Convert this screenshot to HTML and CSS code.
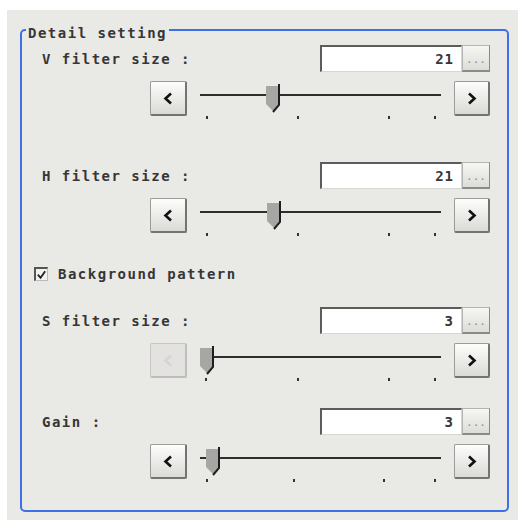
FILE: index.html
```html
<!DOCTYPE html>
<html lang="en">
<head>
  <meta charset="UTF-8">
  <title>Detail setting</title>
  <link rel="stylesheet" href="styles.css">
</head>
<body>

  <div class="panel">
    <fieldset class="detail">
      <legend>Detail setting</legend>

      <div class="group">
        <div class="field-row">
          <span class="label">V filter size :</span>
          <div class="field"><span class="value">21</span><button class="more">...</button></div>
        </div>
        <div class="slider-row">
          <button class="step prev"><svg width="10" height="13" viewBox="0 0 10 13"><polyline points="8,1.5 2.5,6.5 8,11.5"/></svg></button>
          <div class="slider">
            <div class="track"></div>
            <svg class="thumb" style="left:66px" width="16" height="29" viewBox="0 0 16 29"><path class="body" d="M0 2 H12 V21 L7 27 L0 20 Z"/><path class="edge" d="M13 0 V21 L7 28"/></svg>
            <i class="tick" style="left:6px"></i>
            <i class="tick" style="left:97px"></i>
            <i class="tick" style="left:188px"></i>
            <i class="tick" style="left:234px"></i>
          </div>
          <button class="step"><svg width="10" height="13" viewBox="0 0 10 13"><polyline points="2,1.5 7.5,6.5 2,11.5"/></svg></button>
        </div>
      </div>

      <div class="group g-h">
        <div class="field-row">
          <span class="label">H filter size :</span>
          <div class="field"><span class="value">21</span><button class="more">...</button></div>
        </div>
        <div class="slider-row">
          <button class="step prev"><svg width="10" height="13" viewBox="0 0 10 13"><polyline points="8,1.5 2.5,6.5 8,11.5"/></svg></button>
          <div class="slider">
            <div class="track"></div>
            <svg class="thumb" style="left:67px" width="16" height="29" viewBox="0 0 16 29"><path class="body" d="M0 2 H12 V21 L7 27 L0 20 Z"/><path class="edge" d="M13 0 V21 L7 28"/></svg>
            <i class="tick" style="left:6px"></i>
            <i class="tick" style="left:97px"></i>
            <i class="tick" style="left:188px"></i>
            <i class="tick" style="left:234px"></i>
          </div>
          <button class="step"><svg width="10" height="13" viewBox="0 0 10 13"><polyline points="2,1.5 7.5,6.5 2,11.5"/></svg></button>
        </div>
      </div>

      <label class="check-row">
        <span class="checkbox"><svg width="12" height="12" viewBox="0 0 12 12"><polyline points="2,5.5 5,9 10,2"/></svg></span>
        <span>Background pattern</span>
      </label>

      <div class="group g-s">
        <div class="field-row">
          <span class="label">S filter size :</span>
          <div class="field"><span class="value">3</span><button class="more">...</button></div>
        </div>
        <div class="slider-row">
          <button class="step prev" disabled><svg width="10" height="13" viewBox="0 0 10 13"><polyline points="8,1.5 2.5,6.5 8,11.5"/></svg></button>
          <div class="slider">
            <div class="track"></div>
            <svg class="thumb" style="left:0px" width="16" height="29" viewBox="0 0 16 29"><path class="body" d="M0 2 H12 V21 L7 27 L0 20 Z"/><path class="edge" d="M13 0 V21 L7 28"/></svg>
            <i class="tick" style="left:5px"></i>
            <i class="tick" style="left:97px"></i>
            <i class="tick" style="left:188px"></i>
            <i class="tick" style="left:234px"></i>
          </div>
          <button class="step"><svg width="10" height="13" viewBox="0 0 10 13"><polyline points="2,1.5 7.5,6.5 2,11.5"/></svg></button>
        </div>
      </div>

      <div class="group g-gain">
        <div class="field-row">
          <span class="label">Gain :</span>
          <div class="field"><span class="value">3</span><button class="more">...</button></div>
        </div>
        <div class="slider-row">
          <button class="step prev"><svg width="10" height="13" viewBox="0 0 10 13"><polyline points="8,1.5 2.5,6.5 8,11.5"/></svg></button>
          <div class="slider">
            <div class="track"></div>
            <svg class="thumb" style="left:6px" width="16" height="29" viewBox="0 0 16 29"><path class="body" d="M0 2 H12 V21 L7 27 L0 20 Z"/><path class="edge" d="M13 0 V21 L7 28"/></svg>
            <i class="tick" style="left:6px"></i>
            <i class="tick" style="left:93px"></i>
            <i class="tick" style="left:183px"></i>
            <i class="tick" style="left:234px"></i>
          </div>
          <button class="step"><svg width="10" height="13" viewBox="0 0 10 13"><polyline points="2,1.5 7.5,6.5 2,11.5"/></svg></button>
        </div>
      </div>
    </fieldset>
  </div>

</body>
</html>
```

FILE: styles.css
```css
:root {
  --panel: #e9e9e5;
  --fg: #363636;
  --blue: #3f6fe6;
  --btn-border: #9c9c9a;
  --btn-shadow: #737371;
}

html, body {
  margin: 0;
  padding: 0;
  background: #fff;
  color: var(--fg);
  font-family: "DejaVu Sans Mono", "Liberation Mono", monospace;
  font-weight: bold;
  font-size: 14px;
}

.panel {
  margin: 10px 0 0 7px;
  height: 510px;
  box-sizing: border-box;
  padding: 9px 9px 8px 13px;
  background: var(--panel);
  display: flex;
  flex-direction: column;
}

.detail {
  flex: 1;
  margin: 0;
  min-width: 0;
  border: 2px solid var(--blue);
  border-radius: 5px;
  padding: 5px 17px 0 12px;
}

.detail legend {
  margin-left: -8px;
  padding: 7px 2px 0 2px;
  line-height: 14px;
  letter-spacing: 1.5px;
}

.group {
  display: flex;
  flex-direction: column;
  gap: 9px;
}

.g-h { margin-top: 46px; }
.g-s { margin-top: 24px; }
.g-gain { margin-top: 30px; }

.field-row {
  display: flex;
  align-items: center;
  justify-content: space-between;
  height: 27px;
}

.label {
  padding-left: 8px;
  letter-spacing: 1.5px;
}

.field {
  display: flex;
}

.value {
  width: 142px;
  height: 27px;
  box-sizing: border-box;
  background: #fff;
  border-top: 2px solid #5c5c5c;
  border-left: 2px solid #5c5c5c;
  border-right: 1px solid #d6d6d2;
  border-bottom: 1px solid #d6d6d2;
  text-align: right;
  padding-right: 7px;
  line-height: 24px;
  letter-spacing: 1px;
}

button {
  padding: 0;
  margin: 0;
  font: inherit;
  display: flex;
  align-items: center;
  justify-content: center;
  box-sizing: border-box;
}

.more {
  width: 28px;
  height: 27px;
  background: linear-gradient(#f6f6f4, #dcdcd8);
  border: 1px solid #b4b4b2;
  border-right-color: #8a8a88;
  border-bottom: 2px solid #8a8a88;
  color: #8c8c8c;
  font-weight: normal;
  font-size: 11px;
  letter-spacing: 0;
  padding-top: 3px;
}

.slider-row {
  display: flex;
  align-items: flex-start;
  gap: 13px;
  padding-left: 116px;
  height: 35px;
}

.step {
  width: 36px;
  height: 35px;
  flex: none;
  background: linear-gradient(#fdfdfc, #dadad6);
  border: 1px solid var(--btn-border);
  border-right: 2px solid var(--btn-shadow);
  border-bottom: 2px solid var(--btn-shadow);
  border-radius: 2px;
}

.step.prev {
  width: 37px;
}

.step svg polyline {
  fill: none;
  stroke: #111;
  stroke-width: 2.6;
}

.step:disabled {
  background: #e4e2e0;
  border: 1px solid #c6c6c4;
  border-right: 2px solid #bdbdbb;
  border-bottom: 2px solid #bdbdbb;
}

.step:disabled svg polyline {
  stroke: #d6d4d2;
}

.slider {
  flex: 1;
  position: relative;
  height: 35px;
}

.track {
  position: absolute;
  left: 0;
  right: 0;
  top: 13px;
  height: 2px;
  background: #2e2e2e;
}

.thumb {
  position: absolute;
  top: 3px;
}

.thumb .body {
  fill: #a6a6a4;
}

.thumb .edge {
  fill: none;
  stroke: #1e1e1e;
  stroke-width: 2;
}

.tick {
  position: absolute;
  top: 35px;
  width: 2px;
  height: 3px;
  background: #333;
}

.check-row {
  display: flex;
  align-items: center;
  gap: 10px;
  height: 18px;
  margin-top: 32px;
  letter-spacing: 1.5px;
}

.checkbox {
  width: 14px;
  height: 14px;
  box-sizing: border-box;
  background: #f2f2f0;
  border-top: 2px solid #555;
  border-left: 2px solid #555;
  border-right: 1px solid #bbb;
  border-bottom: 1px solid #bbb;
  display: flex;
  align-items: center;
  justify-content: center;
}

.checkbox polyline {
  fill: none;
  stroke: #222;
  stroke-width: 2;
}
```
